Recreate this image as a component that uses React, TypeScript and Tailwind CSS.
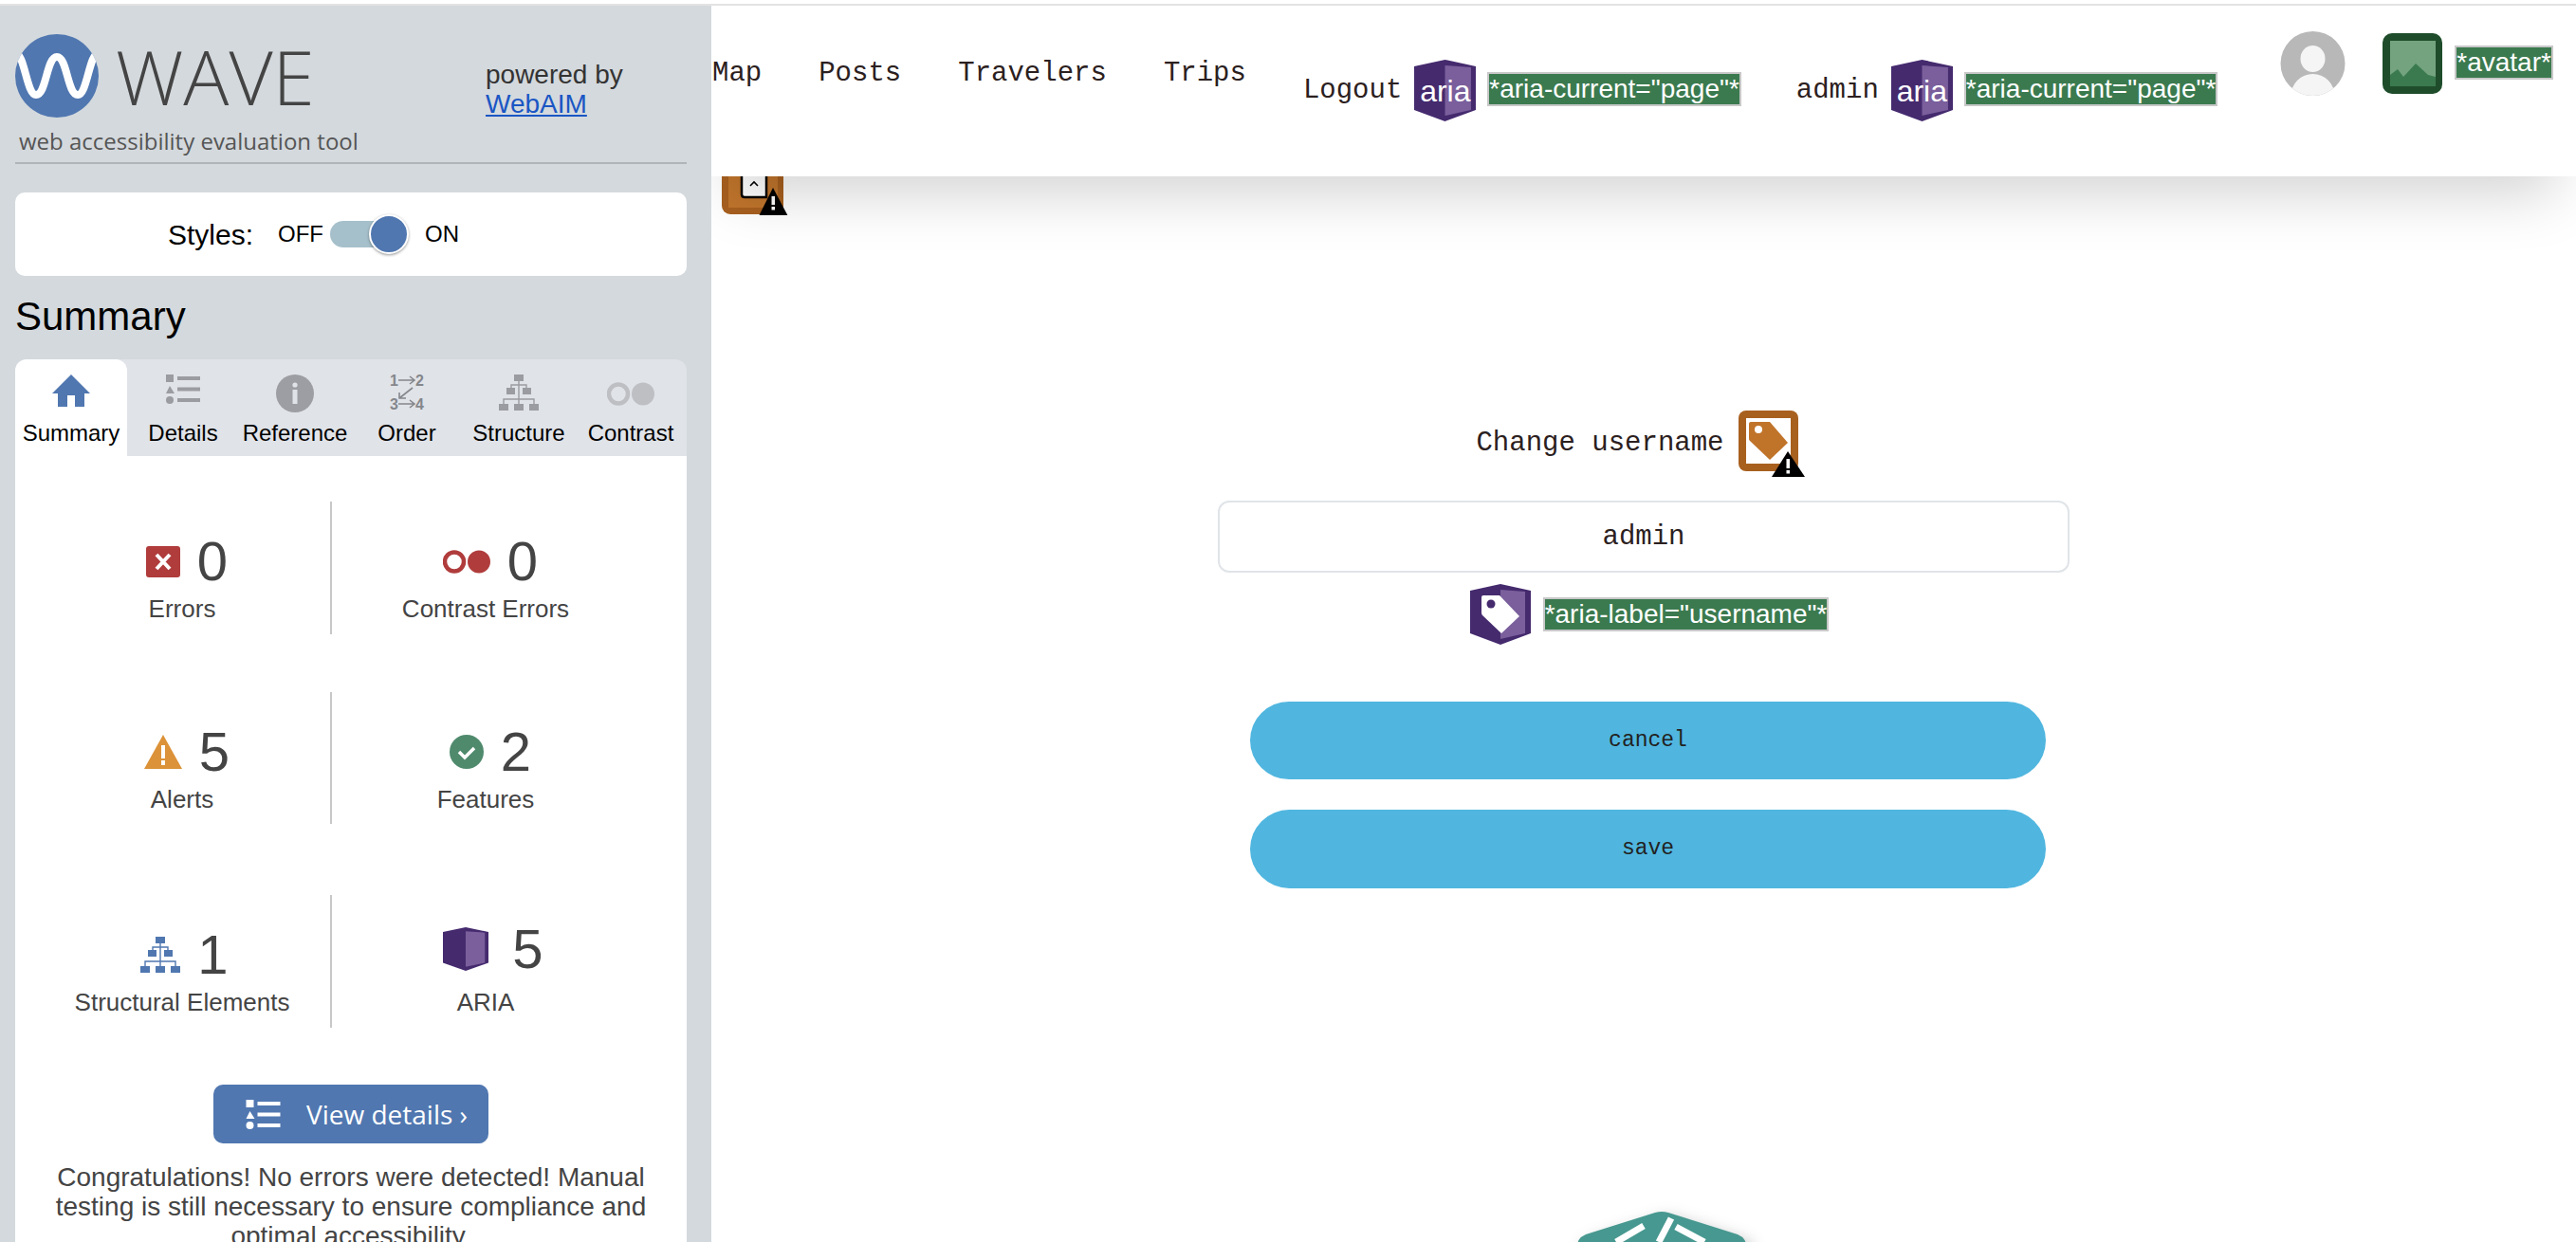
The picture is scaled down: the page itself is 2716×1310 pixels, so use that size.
const sans = "font-['Liberation_Sans',Arial,sans-serif]";

function WaveLogo() {
  return (
    <svg viewBox="0 0 88 88" className="w-[88px] h-[88px] shrink-0">
      <defs>
        <clipPath id="wave-clip">
          <circle cx="44" cy="44" r="44" />
        </clipPath>
      </defs>
      <circle cx="44" cy="44" r="44" fill="#5077b0" />
      <path
        clipPath="url(#wave-clip)"
        d="M0 20 C10 20 12 64 22 64 C33 64 33 24 44 24 C55 24 55 64 66 64 C76 64 78 20 88 20"
        fill="none"
        stroke="#fff"
        strokeWidth="8"
      />
    </svg>
  );
}

function HomeIcon() {
  return (
    <svg viewBox="0 0 40 34" className="w-10 h-[34px]">
      <path d="M20 0 L40 20 H34 V34 H24 V22 H16 V34 H6 V20 H0 Z" fill="#5077b0" />
    </svg>
  );
}

function ListIcon({ color = "#9a9ca1", className = "w-9 h-[31px]" }: { color?: string; className?: string }) {
  return (
    <svg viewBox="0 0 36 31" className={className}>
      <rect x="0" y="0" width="8" height="8" fill={color} />
      <path d="M4 12 L9 20 H0 Z" fill={color} />
      <circle cx="4" cy="27" r="4" fill={color} />
      <rect x="12" y="2" width="24" height="4" fill={color} />
      <rect x="12" y="13.5" width="24" height="4" fill={color} />
      <rect x="12" y="25" width="24" height="4" fill={color} />
    </svg>
  );
}

function InfoIcon() {
  return (
    <svg viewBox="0 0 40 40" className="w-10 h-10">
      <circle cx="20" cy="20" r="20" fill="#9d9ea3" />
      <circle cx="20" cy="11" r="2.6" fill="#e0e3e8" />
      <rect x="17.5" y="16" width="5" height="15" fill="#e0e3e8" />
    </svg>
  );
}

function OrderIcon() {
  return (
    <svg viewBox="0 -4 37 46" className="w-[37px] h-[46px] -mt-1" fill="none" stroke="#85878c" strokeWidth="1.6">
      <text x="0" y="12" fontSize="16" fontWeight="700" fontFamily="Liberation Sans" fill="#85878c" stroke="none">1</text>
      <text x="27" y="12" fontSize="16" fontWeight="700" fontFamily="Liberation Sans" fill="#85878c" stroke="none">2</text>
      <path d="M9 6 H26 M21 2 L26 6 L21 10" />
      <path d="M24 14 L10 25 M10 19 V25 H17" />
      <text x="0" y="37" fontSize="16" fontWeight="700" fontFamily="Liberation Sans" fill="#85878c" stroke="none">3</text>
      <text x="27" y="37" fontSize="16" fontWeight="700" fontFamily="Liberation Sans" fill="#85878c" stroke="none">4</text>
      <path d="M9 31 H26 M21 27 L26 31 L21 35" />
    </svg>
  );
}

function TreeIcon({ color = "#9a9ca1", className = "w-[42px] h-[38px]" }: { color?: string; className?: string }) {
  return (
    <svg viewBox="0 0 42 38" className={className}>
      <rect x="16" y="0" width="10" height="7" fill={color} />
      <rect x="8" y="14" width="9" height="7" fill={color} />
      <rect x="25" y="14" width="9" height="7" fill={color} />
      <rect x="0" y="31" width="10" height="7" fill={color} />
      <rect x="16" y="31" width="10" height="7" fill={color} />
      <rect x="32" y="31" width="10" height="7" fill={color} />
      <path d="M21 7 V11 H13 V14 M21 11 H29 V14 M21 11 V26 M5 31 V26 H37 V31 M21 26 V31" fill="none" stroke={color} strokeWidth="1.4" />
    </svg>
  );
}

function ContrastIcon({ color, hole, className }: { color: string; hole: string; className: string }) {
  return (
    <svg viewBox="0 0 50 25" className={className}>
      <ellipse cx="12" cy="12.5" rx="10" ry="10" fill={hole} stroke={color} strokeWidth="4.5" />
      <ellipse cx="38" cy="12.5" rx="12" ry="12" fill={color} />
    </svg>
  );
}

function AriaShape({ className }: { className: string }) {
  return (
    <svg viewBox="0 0 64 65" preserveAspectRatio="none" className={className}>
      <path d="M0 7 L32 0 L64 7 V53 L32 65 L0 53 Z" fill="#452a6e" />
      <path d="M32 6 L59 8 V53 L32 59 Z" fill="#7a5f9c" />
    </svg>
  );
}

function AriaBadge() {
  return (
    <span className="relative inline-flex items-center justify-center w-[65px] h-[65px] shrink-0">
      <AriaShape className="absolute inset-0 w-full h-full" />
      <span className={`relative text-[32px] leading-none text-white ${sans}`}>aria</span>
    </span>
  );
}

function AriaLabelIcon() {
  return (
    <svg viewBox="0 0 64 64" className="w-16 h-16 shrink-0">
      <path d="M0 7 L32 0 L64 7 V52 L32 64 L0 52 Z" fill="#452a6e" />
      <path d="M32 6 L58 8 V52 L32 58 Z" fill="#7a5f9c" />
      <path d="M12 14 Q12 12 14 12 H31 L52 34 L33 52 L13 33 Q12 32 12 30 Z" fill="#fff" />
      <circle cx="22" cy="21" r="4.5" fill="#452a6e" />
    </svg>
  );
}

function LabelAlertIcon() {
  return (
    <svg viewBox="0 0 70 70" className="w-[70px] h-[70px] shrink-0">
      <rect x="0" y="0" width="63" height="64" rx="8" fill="#a8601f" />
      <rect x="8" y="8" width="47" height="48" fill="#fff" />
      <path d="M11 14 Q11 12 13 12 H33 L52 34 L33 52 L12 32 Q11 31 11 30 Z" fill="#c0742a" />
      <circle cx="21" cy="20" r="4" fill="#fff" />
      <path d="M52 43 L70 70 H35 Z" fill="#000" />
      <rect x="50.5" y="51" width="3.5" height="10" fill="#fff" />
      <rect x="50.5" y="63" width="3.5" height="3.5" fill="#fff" />
    </svg>
  );
}

function BrokenImageAlert() {
  return (
    <svg viewBox="0 0 72 72" className="w-[72px] h-[72px]">
      <rect x="0" y="0" width="65" height="71" rx="9" fill="#a8601f" />
      <rect x="7" y="4" width="52" height="60" fill="#c0752c" />
      <path d="M21 4 V50 Q21 53 24 53 H47 V4 Z" fill="#fff" stroke="#000" strokeWidth="2.5" />
      <path d="M30 41 L34 37 L38 41" fill="none" stroke="#000" strokeWidth="1.6" />
      <path d="M54 43 L72 77 H37 Z" fill="#000" />
      <rect x="52.5" y="52" width="3.5" height="9" fill="#fff" />
      <rect x="52.5" y="63" width="3.5" height="3.5" fill="#fff" />
    </svg>
  );
}

function Tag({ children }: { children: string }) {
  return (
    <span className={`inline-block h-9 border-2 border-[#c8c8c8] bg-[#3b7a4f] text-[28px] leading-[31px] text-white whitespace-nowrap ${sans}`}>
      {children}
    </span>
  );
}

function Stat({ icon, value, label, gap, shift, lift }: { icon: React.ReactNode; value: number; label: string; gap: string; shift: string; lift?: boolean }) {
  return (
    <div className="flex flex-col items-center pt-[33px]">
      <div className={`flex items-center h-[60px] ${gap} ${shift} ${lift ? "-translate-y-[6px]" : ""}`}>
        {icon}
        <span className="text-[58px] leading-[60px] text-[#444]">{value}</span>
      </div>
      <div className="mt-[5px] text-[26px] leading-[30px] text-[#444] whitespace-nowrap">{label}</div>
    </div>
  );
}

const tabs = [
  { label: "Summary", icon: <HomeIcon /> },
  { label: "Details", icon: <ListIcon /> },
  { label: "Reference", icon: <InfoIcon /> },
  { label: "Order", icon: <OrderIcon /> },
  { label: "Structure", icon: <TreeIcon /> },
  { label: "Contrast", icon: <ContrastIcon color="#bdbfc3" hole="#e0e3e8" className="w-[50px] h-[25px] mt-2" /> },
];

function Sidebar() {
  return (
    <aside className={`w-[750px] shrink-0 h-full bg-[#d4d9dd] pl-4 pr-[26px] text-black ${sans}`}>
      {/* Brand */}
      <div className="flex items-start pt-[30px]">
        <WaveLogo />
        <div className="w-[408px] pl-[18px] shrink-0 h-[88px] flex items-center">
          <span className="font-['Open_Sans',sans-serif] font-light text-[80px] leading-none text-[#444]">WAVE</span>
        </div>
        <div className="pt-[27px] text-[28px] leading-[31px] text-[#333] whitespace-nowrap">
          <div>powered by</div>
          <a className="text-[#1a56c4] underline">WebAIM</a>
        </div>
      </div>
      <div className="mt-[9px] pl-1 h-[30px] font-['Open_Sans',sans-serif] text-[24px] leading-[30px] text-[#555]">
        web accessibility evaluation tool
      </div>
      <div className="mt-[7px] h-[2px] bg-[#b0b5ba]" />

      {/* Styles toggle */}
      <div className="mt-[30px] h-[88px] rounded-[10px] bg-white flex items-center pl-[161px]">
        <span className="text-[30px] w-[116px]">Styles:</span>
        <span className="text-[24px] w-[55px]">OFF</span>
        <span className="relative w-[83px] h-[42px] mr-[17px] flex items-center">
          <span className="w-[72px] h-7 rounded-full bg-[#a6c0cb]" />
          <span className="absolute right-0 top-0 w-[42px] h-[42px] rounded-full bg-[#5077b0] border-2 border-white shadow-[0_1px_3px_rgba(0,0,0,0.4)]" />
        </span>
        <span className="text-[24px]">ON</span>
      </div>

      <h2 className="mt-[18px] text-[42px] leading-[50px] font-normal">Summary</h2>

      {/* Tabs */}
      <div className="mt-5 h-[102px] rounded-t-[12px] bg-[#e0e3e8] grid grid-cols-6">
        {tabs.map((t, i) => (
          <div key={t.label} className={`flex flex-col items-center pt-4 ${i === 0 ? "bg-white rounded-t-[12px]" : ""}`}>
            <div className="h-[47px] flex items-start justify-center">{t.icon}</div>
            <div className="text-[24px] leading-[30px] whitespace-nowrap">{t.label}</div>
          </div>
        ))}
      </div>

      {/* Panel */}
      <div className="bg-white h-[900px] pt-12">
        <div className="ml-5 w-[638px] grid grid-cols-[314px_324px]">
          <div className="h-[140px] border-r-2 border-[#c8c8c8]">
            <Stat
              gap="gap-[18px]"
              shift="ml-[10px]"
              value={0}
              label="Errors"
              icon={
                <svg viewBox="0 0 36 33" className="w-9 h-[33px]">
                  <rect width="36" height="33" rx="3" fill="#b03c3c" />
                  <path d="M11 9 L25 24 M25 9 L11 24" stroke="#fff" strokeWidth="4" />
                </svg>
              }
            />
          </div>
          <Stat
            gap="gap-[18px]"
            shift="ml-[10px]"
            value={0}
            label="Contrast Errors"
            icon={<ContrastIcon color="#b03c3c" hole="#fff" className="w-[50px] h-[25px]" />}
          />
        </div>
        <div className="mt-[61px] ml-5 w-[638px] grid grid-cols-[314px_324px]">
          <div className="h-[139px] border-r-2 border-[#c8c8c8]">
            <Stat
              gap="gap-[18px]"
              shift="ml-[10px]"
              value={5}
              label="Alerts"
              icon={
                <svg viewBox="0 0 40 36" className="w-10 h-9">
                  <path d="M20 0 L40 36 H0 Z" fill="#dc9238" />
                  <rect x="18" y="11" width="4" height="14" fill="#fff" />
                  <rect x="18" y="27" width="4" height="5" fill="#fff" />
                </svg>
              }
            />
          </div>
          <Stat
            gap="gap-[18px]"
            shift="ml-[10px]"
            value={2}
            label="Features"
            icon={
              <svg viewBox="0 0 36 36" className="w-9 h-9">
                <circle cx="18" cy="18" r="18" fill="#4f8a6d" />
                <path d="M10 18 L16 24 L26 14" fill="none" stroke="#fff" strokeWidth="3.5" />
              </svg>
            }
          />
        </div>
        <div className="mt-[75px] ml-5 w-[638px] grid grid-cols-[314px_324px]">
          <div className="h-[140px] border-r-2 border-[#c8c8c8]">
            <Stat
              gap="gap-[18px]"
              shift="ml-[5px]"
              value={1}
              label="Structural Elements"
              icon={<TreeIcon color="#5077b0" />}
            />
          </div>
          <Stat
            gap="gap-[25px]"
            shift="ml-4"
            value={5}
            label="ARIA"
            lift
            icon={<AriaShape className="w-12 h-[46px]" />}
          />
        </div>

        <div className="mt-[60px] mx-auto w-[290px] h-[62px] rounded-[10px] bg-[#5077b0] flex items-center pl-[34px] text-white">
          <ListIcon color="#fff" className="w-[37px] h-[31px]" />
          <span className="ml-[27px] font-['Open_Sans',sans-serif] text-[28px] whitespace-nowrap">View details ›</span>
        </div>
        <p className="mt-5 px-[30px] text-center text-[28px] leading-[31px] text-[#444]">
          Congratulations! No errors were detected! Manual testing is still necessary to ensure compliance and optimal accessibility.
        </p>
      </div>
    </aside>
  );
}

function Main() {
  const mono = "font-['Liberation_Mono',monospace] text-[29px] text-[#2b2020]";
  return (
    <main className="relative flex-1 min-w-0 h-full overflow-hidden">
      <div className="absolute left-[11px] top-[149px]">
        <BrokenImageAlert />
      </div>

      <header className={`relative z-10 h-[180px] bg-white shadow-[0_40px_60px_-20px_rgba(0,0,0,0.17)] flex items-start pl-[1px] whitespace-nowrap ${mono}`}>
        <nav className="flex gap-[60px] mt-[52px] leading-10">
          <a>Map</a>
          <a>Posts</a>
          <a>Travelers</a>
          <a>Trips</a>
        </nav>
        <div className="flex items-center h-[65px] mt-[57px] ml-[60px]">
          <a>Logout</a>
          <span className="ml-[13px]"><AriaBadge /></span>
          <span className="ml-3"><Tag>{'*aria-current="page"*'}</Tag></span>
          <a className="ml-[58px]">admin</a>
          <span className="ml-[13px]"><AriaBadge /></span>
          <span className="ml-3"><Tag>{'*aria-current="page"*'}</Tag></span>
        </div>
        <svg viewBox="0 0 69 68" className="w-[69px] h-[68px] mt-[27px] ml-[66px] shrink-0">
          <defs>
            <clipPath id="avatar-clip">
              <circle cx="34.5" cy="34" r="34" />
            </clipPath>
          </defs>
          <circle cx="34.5" cy="34" r="34" fill="#b8b8b8" />
          <g clipPath="url(#avatar-clip)" fill="#f5f5f5">
            <ellipse cx="34.5" cy="29" rx="13" ry="14" />
            <ellipse cx="34.5" cy="68" rx="23" ry="23" />
          </g>
        </svg>
        <svg viewBox="0 0 63 64" className="w-[63px] h-16 mt-[29px] ml-[39px] shrink-0">
          <rect width="63" height="64" rx="10" fill="#1f4d2b" />
          <rect x="8" y="8" width="48" height="48" fill="#74a380" />
          <path d="M8 56 V44 L16 38 L22 46 L35 32 L48 44 L56 46 V56 Z" fill="#3b7a4f" />
        </svg>
        <span className="ml-[13px] mt-[40px]"><Tag>*avatar*</Tag></span>
      </header>

      <section className="flex flex-col items-center pt-[250px]">
        <div className="flex items-center gap-[15px] mr-[7px] h-[64px]">
          <span className={mono}>Change username</span>
          <LabelAlertIcon />
        </div>
        <input
          readOnly
          value="admin"
          className={`mt-7 w-[898px] h-[76px] rounded-xl border-2 border-[#e0e4e8] text-center outline-none ${mono}`}
        />
        <div className="mt-3 ml-3 flex items-center gap-[13px]">
          <AriaLabelIcon />
          <Tag>{'*aria-label="username"*'}</Tag>
        </div>
        <button className="mt-[60px] ml-[9px] w-[839px] h-[82px] rounded-full bg-[#50b6df] font-['Liberation_Mono',monospace] text-[23px] text-[#222]">
          cancel
        </button>
        <button className="mt-8 ml-[9px] w-[839px] h-[83px] rounded-full bg-[#50b6df] font-['Liberation_Mono',monospace] text-[23px] text-[#222]">
          save
        </button>
        <svg viewBox="0 0 180 90" className="mt-[341px] ml-[38px] w-[180px] h-[90px] shrink-0 overflow-visible drop-shadow-[6px_6px_8px_rgba(0,0,0,0.25)]">
          <path d="M83 1 Q90 -1 97 1 L170 24 Q180 28 180 40 V90 H0 V40 Q0 28 10 24 Z" fill="#479890" />
          <path d="M71 15 L42 32 M100 7 L87 32 M105 16 L135 32" stroke="#fff" strokeWidth="7" fill="none" />
        </svg>
      </section>
    </main>
  );
}

export default function App() {
  return (
    <div className="w-[2716px] h-[1310px] overflow-hidden bg-white flex flex-col">
      <div className="h-1 shrink-0 bg-white" />
      <div className="h-[2px] shrink-0 bg-[#e3e3e3]" />
      <div className="flex flex-1 min-h-0">
        <Sidebar />
        <Main />
      </div>
    </div>
  );
}
